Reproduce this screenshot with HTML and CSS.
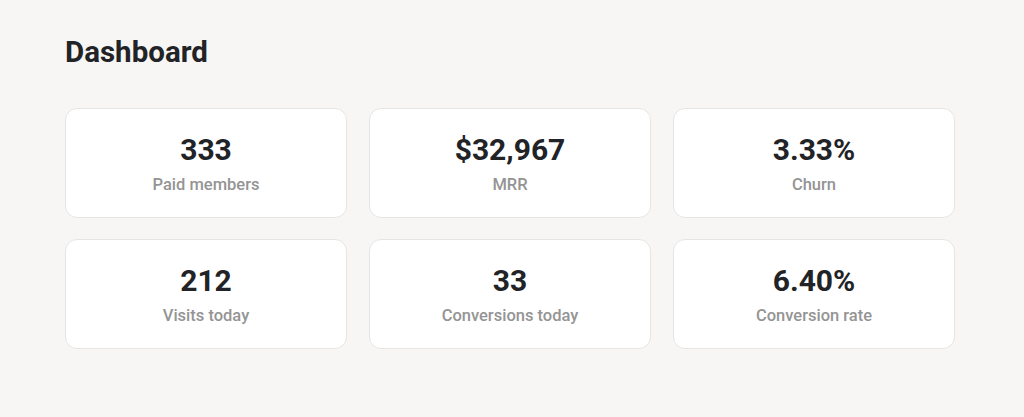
FILE: index.html
```html
<!DOCTYPE html>
<html>
<head>
<meta charset="utf-8">
<link rel="stylesheet" href="styles.css">
</head>
<body>
<main class="page">
  <h1 class="title">Dashboard</h1>
  <div class="grid">
    <div class="card"><div class="value">333</div><div class="label">Paid members</div></div>
    <div class="card"><div class="value">$32,967</div><div class="label">MRR</div></div>
    <div class="card"><div class="value">3.33%</div><div class="label">Churn</div></div>
    <div class="card"><div class="value">212</div><div class="label">Visits today</div></div>
    <div class="card"><div class="value">33</div><div class="label">Conversions today</div></div>
    <div class="card"><div class="value">6.40%</div><div class="label">Conversion rate</div></div>
  </div>
</main>
</body>
</html>
```
FILE: styles.css
```css
html, body {
  margin: 0;
  padding: 0;
  background: #f7f6f4;
  font-family: Roboto, "Liberation Sans", sans-serif;
  color: #222326;
}
.page {
  padding: 35px 65px 0 65px;
  width: 890px;
}
.title {
  margin: 0 0 38px 0;
  font-size: 29.5px;
  line-height: 35px;
  font-weight: 700;
}
.grid {
  display: grid;
  grid-template-columns: repeat(3, 1fr);
  gap: 21px 22px;
}
.card {
  background: #ffffff;
  border: 1px solid #e6e5e3;
  border-radius: 12px;
  height: 108px;
  display: flex;
  flex-direction: column;
  align-items: center;
  justify-content: center;
  gap: 7px;
}
.value {
  font-size: 30px;
  line-height: 36px;
  font-weight: 700;
}
.label {
  font-size: 16.5px;
  line-height: 20px;
  font-weight: 500;
  color: #949494;
}
```
